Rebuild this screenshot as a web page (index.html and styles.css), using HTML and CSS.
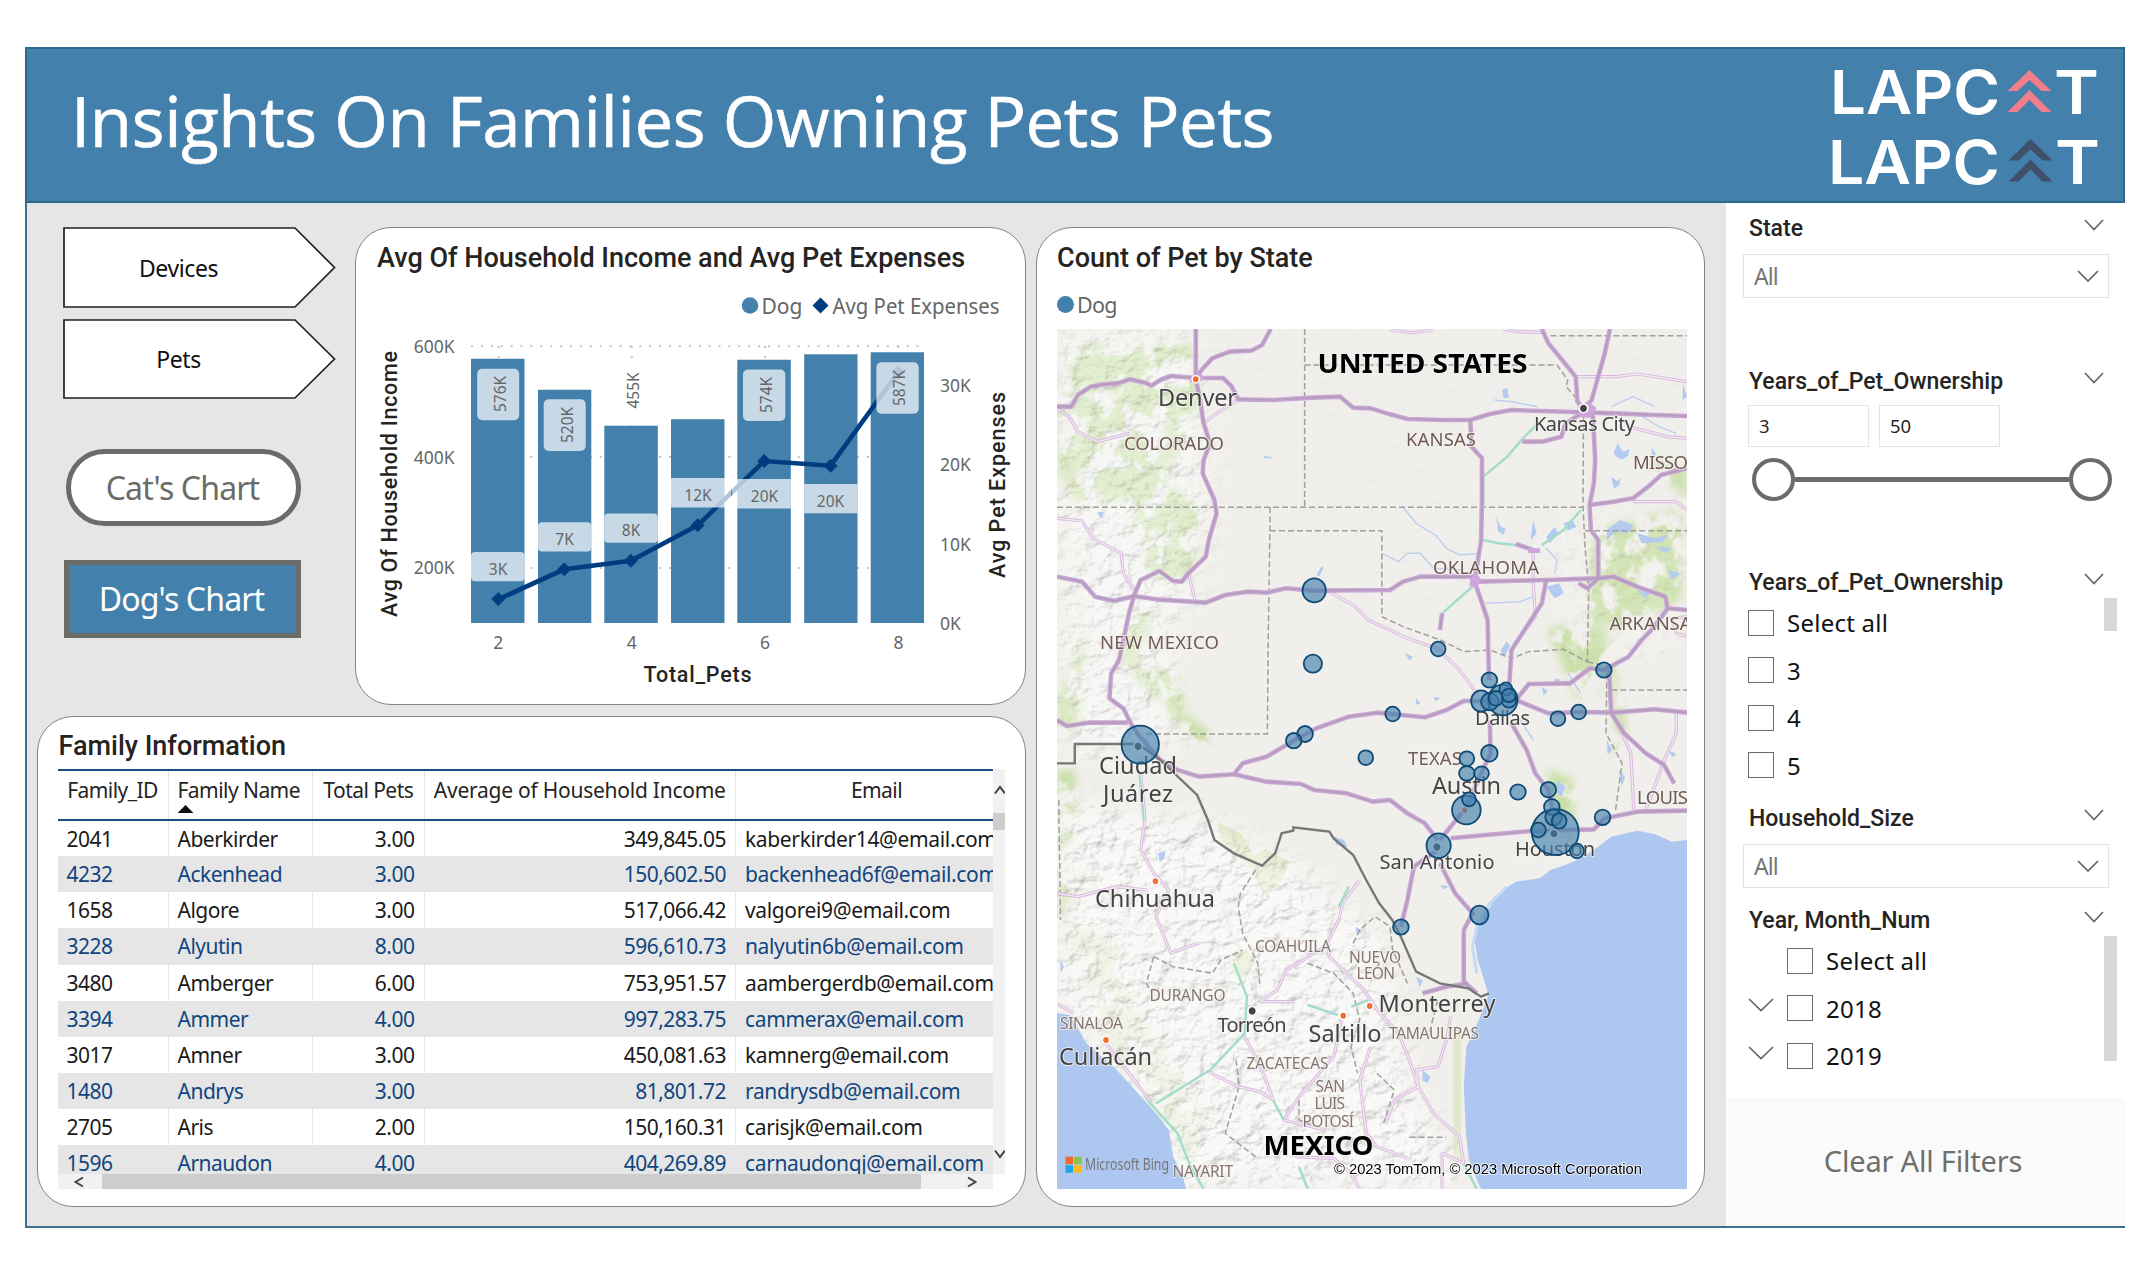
FILE: index.html
```html
<!DOCTYPE html>
<html lang="en">
<head>
<meta charset="utf-8">
<title>Insights On Families Owning Pets</title>
<link rel="stylesheet" href="styles.css">
</head>
<body>
<main class="report">
  <header class="header">
    <h1>Insights On Families Owning Pets Pets</h1>
    <div class="logos">
      <svg class="logo" width="270" height="69" viewBox="0 0 270 69">
        <text class="logo-text" x="-1" y="58" textLength="170" lengthAdjust="spacingAndGlyphs">LAPC</text>
        <path fill="#f17f8b" d="M198.500 14l22 21h-10l-12-11-12 11h-10zM198.500 34l22 22h-10l-12-12-12 12h-10z"/>
        <text class="logo-text" x="223" y="58" textLength="45" lengthAdjust="spacingAndGlyphs">T</text>
      </svg>
      <svg class="logo" width="270" height="70" viewBox="0 0 270 70">
        <text class="logo-text" x="-3" y="59" textLength="172" lengthAdjust="spacingAndGlyphs">LAPC</text>
        <path fill="#40506a" d="M199.500 14l22 21.500h-10l-12-11-12 11h-10zM199.500 34.500l22 22h-10l-12-12-12 12h-10z"/>
        <text class="logo-text" x="224" y="59" textLength="45" lengthAdjust="spacingAndGlyphs">T</text>
      </svg>
    </div>
  </header>

  <div class="body">
    <section class="canvas">
      <div class="left">
        <div class="top">
          <nav class="nav">
            <a class="arrow"><svg width="273" height="81" viewBox="0 0 273 81"><path d="M1 1H232L271.500 40.500 232 80H1Z" fill="#fff" stroke="#222" stroke-width="1.700"/></svg><span>Devices</span></a>
            <a class="arrow"><svg width="273" height="80" viewBox="0 0 273 80"><path d="M1 1H232L271.500 40 232 79H1Z" fill="#fff" stroke="#222" stroke-width="1.700"/></svg><span>Pets</span></a>
            <button class="btn cat">Cat's Chart</button>
            <button class="btn dog">Dog's Chart</button>
          </nav>

          <article class="card chart-card">
            <h2>Avg Of Household Income and Avg Pet Expenses</h2>
            <svg class="chart" width="669" height="420" viewBox="356 284 669 420">
              <g class="legend">
                <circle cx="750" cy="305.500" r="8.300" fill="#4482ac"/>
                <text x="761.500" y="314" textLength="41" lengthAdjust="spacingAndGlyphs">Dog</text>
                <path d="M820.500 297.500l8 8-8 8-8-8z" fill="#003d80"/>
                <text x="832.500" y="314" textLength="167" lengthAdjust="spacingAndGlyphs">Avg Pet Expenses</text>
              </g>
              <g class="grid">
                <path d="M471 346.300H924M471 457H924M471 568H924"/>
                <path d="M498.500 346V623M631.700 346V623M765 346V623M898.400 346V623"/>
              </g>
              <path class="bars" d="M471 358.700h53.500V623H471zM538 389.700h53.300V623H538zM604.300 425.700h53.500V623H604.300zM671 419.300h53.500V623H671zM737.300 359.700h53.500V623H737.300zM804.200 354.300h53.300V623H804.200zM870.700 352.300H924V623H870.700z"/>
              <polyline class="trend" points="498.300,599.300 564.300,569.300 630.800,560.700 697.700,525.300 764.200,461 830.600,465.700 898,372.700"/>
              <path fill="#003d80" d="M498.300 592l7 7-7 7-7-7zM564.300 562.300l7 7-7 7-7-7zM630.800 553.700l7 7-7 7-7-7zM697.700 518.300l7 7-7 7-7-7zM764.200 454l7 7-7 7-7-7zM830.600 458.700l7 7-7 7-7-7zM898 365.700l7 7-7 7-7-7z"/>
              <g class="tags">
                <rect x="471" y="552" width="53.500" height="29.300" rx="4"/>
                <rect x="538" y="522.300" width="53.300" height="29.300" rx="4"/>
                <rect x="604.300" y="513.500" width="53.500" height="29.300" rx="4"/>
                <rect x="671" y="478" width="60" height="29.500"/>
                <rect x="731.500" y="479" width="59.300" height="29.500"/>
                <rect x="804.200" y="484" width="53.300" height="29.300"/>
                <rect x="477.200" y="368.700" width="42" height="51.500" rx="5"/>
                <rect x="543.700" y="399.300" width="42" height="51.700" rx="5"/>
                <rect x="610" y="366" width="43" height="51" rx="5" class="blank"/>
                <rect x="743" y="369.500" width="42.300" height="51.500" rx="5"/>
                <rect x="876.400" y="362.300" width="42.300" height="51.500" rx="5"/>
              </g>
              <g class="tag-text">
                <text x="498" y="575">3K</text><text x="564.500" y="545">7K</text><text x="631" y="536">8K</text>
                <text x="698" y="501">12K</text><text x="764.500" y="502">20K</text><text x="830.500" y="507">20K</text>
                <text transform="translate(506 394) rotate(-90)">576K</text>
                <text transform="translate(573 425) rotate(-90)">520K</text>
                <text transform="translate(639 390.500) rotate(-90)">455K</text>
                <text transform="translate(772 395) rotate(-90)">574K</text>
                <text transform="translate(905 388) rotate(-90)">587K</text>
              </g>
              <g class="axis">
                <g text-anchor="end"><text x="454.500" y="352.500">600K</text><text x="454.500" y="463.500">400K</text><text x="454.500" y="573.500">200K</text></g>
                <text x="940" y="391.500">30K</text><text x="940" y="470.500">20K</text><text x="940" y="550.500">10K</text><text x="940" y="629.500">0K</text>
                <g text-anchor="middle"><text x="498.300" y="649">2</text><text x="631.700" y="649">4</text><text x="765" y="649">6</text><text x="898.400" y="649">8</text></g>
              </g>
              <g class="axis-title">
                <text x="643.500" y="682" textLength="108">Total_Pets</text>
                <text transform="translate(397 617) rotate(-90)" textLength="266">Avg Of Household Income</text>
                <text transform="translate(1004.500 578) rotate(-90)" textLength="186">Avg Pet Expenses</text>
              </g>
            </svg>
          </article>
        </div>

        <article class="card table-card">
          <h2>Family Information</h2>
          <div class="table-area">
            <div class="viewport">
              <table>
                <colgroup><col class="c1"><col class="c2"><col class="c3"><col class="c4"><col class="c5"></colgroup>
                <thead><tr><th>Family_ID</th><th class="l">Family Name<i class="sort"></i></th><th>Total Pets</th><th class="wide">Average of Household Income</th><th>Email</th></tr></thead>
                <tbody>
                  <tr><td>2041</td><td>Aberkirder</td><td>3.00</td><td>349,845.05</td><td>kaberkirder14@email.com</td></tr>
                  <tr><td>4232</td><td>Ackenhead</td><td>3.00</td><td>150,602.50</td><td>backenhead6f@email.com</td></tr>
                  <tr><td>1658</td><td>Algore</td><td>3.00</td><td>517,066.42</td><td>valgorei9@email.com</td></tr>
                  <tr><td>3228</td><td>Alyutin</td><td>8.00</td><td>596,610.73</td><td>nalyutin6b@email.com</td></tr>
                  <tr><td>3480</td><td>Amberger</td><td>6.00</td><td>753,951.57</td><td>aambergerdb@email.com</td></tr>
                  <tr><td>3394</td><td>Ammer</td><td>4.00</td><td>997,283.75</td><td>cammerax@email.com</td></tr>
                  <tr><td>3017</td><td>Amner</td><td>3.00</td><td>450,081.63</td><td>kamnerg@email.com</td></tr>
                  <tr><td>1480</td><td>Andrys</td><td>3.00</td><td>81,801.72</td><td>randrysdb@email.com</td></tr>
                  <tr><td>2705</td><td>Aris</td><td>2.00</td><td>150,160.31</td><td>carisjk@email.com</td></tr>
                  <tr><td>1596</td><td>Arnaudon</td><td>4.00</td><td>404,269.89</td><td>carnaudonqj@email.com</td></tr>
                </tbody>
              </table>
            </div>
            <div class="vscroll">
              <svg width="12" height="10" viewBox="0 0 12 10"><path d="M2 8.500l5-6.500 5 6.500"/></svg>
              <i></i>
              <svg width="12" height="10" viewBox="0 0 12 10"><path d="M2 1.500l5 6.500 5-6.500"/></svg>
            </div>
            <div class="hscroll">
              <svg width="10" height="12" viewBox="0 0 10 12"><path d="M9 1.500L1.500 6 9 10.500"/></svg>
              <i></i>
              <svg width="10" height="12" viewBox="0 0 10 12"><path d="M1 1.500L8.500 6 1 10.500"/></svg>
            </div>
          </div>
        </article>
      </div>

      <article class="card map-card">
        <h2>Count of Pet by State</h2>
        <p class="map-legend"><i></i>Dog</p>
        <svg class="map" width="630" height="860" viewBox="0 0 630 860">
          <defs>
            <filter id="relief" x="0" y="0" width="100%" height="100%">
              <feTurbulence type="fractalNoise" baseFrequency=".055 .07" numOctaves="4" seed="7"/>
              <feDiffuseLighting surfaceScale="4.500" diffuseConstant="1.150" lighting-color="#fff"><feDistantLight azimuth="225" elevation="60"/></feDiffuseLighting>
            </filter>
            <filter id="patchy" x="-5%" y="-5%" width="110%" height="110%">
              <feTurbulence type="fractalNoise" baseFrequency=".045 .035" numOctaves="5" seed="12" result="n"/>
              <feColorMatrix in="n" type="matrix" values="0 0 0 0 0  0 0 0 0 0  0 0 0 0 0  0 0 0 8 -3.200" result="a"/>
              <feGaussianBlur in="SourceGraphic" stdDeviation="4" result="s"/>
              <feComposite in="s" in2="a" operator="in"/>
            </filter>
            <filter id="edge" x="-10%" y="-10%" width="120%" height="120%"><feGaussianBlur stdDeviation="14"/></filter>
            <mask id="hills">
              <g filter="url(#edge)" fill="#fff">
                <path d="M0 0H130L150 130 140 270 110 300 130 420 20 430 0 400Z" opacity=".8"/>
                <path d="M0 470L60 480 150 490 250 540 330 610 350 740 410 860H110L60 740 0 680Z"/>
                <path d="M500 200H630V330H520Z" opacity=".3"/>
                <path d="M130 0H630V300H150Z" opacity=".08"/>
              </g>
            </mask>
          </defs>
          <rect width="630" height="860" fill="#f0efeb"/>
          <g filter="url(#patchy)" fill="#c9dfa6">
            <path d="M20 15H135L140 75 110 150 145 185 135 250 95 250 70 170 20 175 0 140V60Z"/>
            <path d="M75 270L95 280 80 330 130 350 125 380 160 410 140 420 90 360 60 330Z"/>
            <path d="M0 370L30 300 20 400 0 410ZM0 440H18L20 510 0 520ZM0 540L40 550 20 570 0 580Z"/>
            <path d="M540 200L625 180V270L560 300 520 280ZM490 300L545 290 560 350 520 370ZM590 130L630 140V170Z"/>
            <path d="M490 440L515 450 520 510 495 500ZM555 340L570 400 560 440Z"/>
            <path d="M0 570L60 620 90 700 150 790 140 860 110 800 60 740Z" opacity=".6"/>
          </g>
          <g fill="#cfdfa6"><path d="M160 493L185 505 197 528 208 520 232 532 228 545 210 568 190 535 165 512Z" opacity=".7"/><path d="M176 626l14-6 8 14-10 16-14-6z" opacity=".8"/><path d="M396 700h8v130h-8z" opacity=".45"/></g>
          <g mask="url(#hills)"><rect class="relief" width="630" height="860" filter="url(#relief)"/></g>

          <g transform="scale(.43367 .33333) translate(-62 -327)">
            <path class="water" d="M1515 1860L1480 1865 1440 1842 1400 1832 1340 1850 1300 1890 1270 1915 1235 1935 1200 1950 1175 1975 1120 1985 1100 2002 1070 2030 1062 2060 1045 2080 1033 2110 1025 2160 1032 2220 1047 2280 1057 2325 1035 2400 1006 2480 1000 2600 1005 2740 1012 2820 1027 2870 1040 2907H1515Z"/>
            <path class="water" d="M62 2380L92 2385 130 2470 200 2550 242 2610 290 2680 320 2730 330 2810 350 2860 360 2907H62Z"/>
            <path class="lagoon" d="M1100 2000L1060 2050 1030 2120 1020 2180 1030 2260"/>

            <g class="lakes">
              <path d="M1345 700l10-30 12 25 16-8-4 20-14 12-12-8zM1340 770l14 14 8-12-4 24-12 10zM1432 682l12 20-8 10zM1075 890l10 30 12 6-6 18-12-10zM1160 900l8 40-14 20zM1190 950l20-30 8 20-20 30zM1230 910l20-10 10 20-20 12zM1330 930l30-30 30 15-10 25-30-5-20 25zM1400 940l40 15 30-10-10 20-50 5zM1440 980l40 5-15 14zM1470 1050l30 10-20 20zM1190 1100l30-10 10 30-20 15zM1400 1110l30 10-10 15zM660 1065l12-26 5 4-10 26zM540 708l14 2 8 5-24 0zM1088 510l12-6 4 30-12 0zM155 875l14 2-6 20zM1505 490l10 40-10 10z"/>
              <path d="M1085 1290l14-25 8 10-14 40zM865 1300l18 10-8 12zM1180 1400l14 14-10 12zM930 1430l18 4-14 10zM890 1435l10 14-10 6zM1210 1375l14 4-14 12zM1215 1680l20 20-10 30-12-14zM1330 1560l12 30-10 14zM1358 1650l14 20-8 30zM295 1900l18-8-4 24-10 10zM700 1850l24 10 8 22-26-8zM750 2120l14 10-10 14zM905 2550l18 20-6 20-12-8zM890 2270l16 12-8 20zM945 1995l20 4-10 10zM1470 1590l20 12-8 10zM70 2220l8 20-8 20z"/>
            </g>
            <g class="rivers">
              <path d="M860 862L890 910 935 945 960 985 990 1005 1040 1000M811 1000L850 1025 870 1000 900 1000 930 1045 1000 1050M1070 540L1110 545 1170 560M1340 560L1390 530 1440 560M1050 1150L1130 1145 1160 1130M1190 985L1215 1020 1210 1060"/>
              <path d="M1400 580L1450 620 1490 640M1130 1500L1160 1560M1240 1360L1270 1420"/>
            </g>

            <g class="state-lines">
              <path d="M633 327V862M633 435H1215L1240 480 1236 500 1276 560M1200 347H1515M62 862H1275M553 862V932L549 1260 547 1542H260M553 932H811V1190L860 1220 950 1262 1000 1295 1060 1290 1110 1315 1150 1295 1230 1288 1285 1325 1288 1100 1280 990 1275 862 1276 590M1280 932H1515M1285 1325L1330 1340 1328 1540 1365 1630 1350 1770M1340 1410H1515M66 1740L70 2100"/>
              <path d="M520 1950L485 2020 480 2060 490 2140 525 2230 530 2300M285 2210L330 2240 420 2260 440 2220 490 2190M285 2210L268 2290 280 2320M745 2170L760 2130 795 2090 830 2120 836 2190 870 2290M640 2230L700 2260 745 2320 760 2400 740 2480 755 2560M475 2520L482 2600 450 2740 520 2810M620 2640V2700L680 2730M875 2752H960M800 2560L840 2610 815 2710M940 2340L920 2440"/>
            </g>

            <g class="minor-roads">
              <g id="minor">
              <path d="M62 565L90 590 110 635 155 665 230 640M1090 327L1120 335 1180 337M830 330L880 338 930 330M690 1115L750 1160 780 1200 870 1255 941 1287 990 1350 1030 1420M62 895L120 903 145 955 210 1000 215 1060 240 1110M1160 1000L1160 1080 1165 1190 1125 1260M1258 470L1350 470 1400 462 1515 485M1380 620L1470 650 1515 655M1390 845H1490L1515 870M1515 1190L1480 1195 1490 1240 1515 1250M365 1060L380 1140M480 538L430 580 400 610"/>
              <path d="M1345 1480L1385 1600 1392 1770M1490 1480V1540L1462 1620 1440 1700 1420 1770M255 1660L265 1800 255 1890 285 1960 320 2010 290 2090 325 2200 390 2168M62 2020L110 2030 200 2000 270 2010M760 1980L720 2050 712 2100 685 2170 690 2210 770 2310 800 2370 850 2440 880 2540 895 2600 930 2680 990 2750 1000 2830 950 2800 950 2907"/>
              <path d="M690 2170L630 2220 590 2250 570 2310 530 2345H610M490 2440L520 2510 550 2600 560 2640 530 2615 480 2600 410 2555M720 2390L700 2510 620 2630 585 2700 680 2730M785 2480L760 2580 775 2740 800 2780 870 2815M970 2390L960 2460 940 2540 890 2550 895 2600 840 2640 820 2710M175 2470L240 2580 280 2650M62 2350L100 2380M610 2810L700 2815 740 2860 760 2907"/>
              </g>
              <use href="#minor" class="core"/>
            </g>
            <g class="teal">
              <path d="M1180 600L1140 650 1100 710 1045 770V860M1045 960L1080 970 1120 975M1270 870L1230 930 1180 975M1020 1100L950 1180M1180 573L1245 578M470 2230L500 2330 495 2440 415 2550 290 2650M270 2640L340 2740 370 2840 400 2907M640 2355L710 2385M740 2360L780 2340M560 2640L585 2700M640 2907L620 2840M252 1660L262 1800M735 2000L712 2060M1000 2830L1030 2907"/>
            </g>
            <g class="major-roads">
              <g id="major">
              <path d="M382 327V478L392 540 400 610 415 670 400 720 398 760 425 840 430 880 412 960 405 1010 365 1060 350 1085 330 1083 298 1053 255 1080 240 1125 228 1180 220 1230 205 1320 187 1360 183 1435 215 1465 232 1510 250 1545 300 1620 340 1650 390 1670 470 1663 545 1685 625 1692 655 1710 730 1720 790 1745 830 1740 870 1780 910 1810 940 1860"/>
              <path d="M555 327L535 375 510 392 460 395 420 415 395 450 382 478M62 560H95L110 525 140 500 170 493 200 490 230 478 265 488 280 497 300 480 325 468 382 474H445L465 500 480 538 560 540 650 533 715 530 745 563 785 565 830 583 870 597 950 600H1015L1060 582 1110 570 1180 573 1276 577 1350 580 1440 585 1515 588"/>
              <path d="M62 1070L120 1085 150 1130 195 1143 240 1128 290 1138 405 1148 450 1125 500 1115 545 1118 590 1105 655 1112 830 1110 860 1085 900 1070 1025 1070 1030 1085 1190 1080 1310 1075 1345 1070 1400 1100 1465 1130 1470 1165 1515 1170M1470 1165L1440 1220 1410 1260 1380 1310 1323 1350 1290 1345 1245 1390 1150 1392 1120 1440"/>
              <path d="M1180 327L1195 370 1230 425 1258 470 1262 545 1276 565 1295 540 1310 470 1325 400 1337 327M1276 565L1298 590 1303 720 1300 790 1290 855 1293 930 1310 960V1075L1285 1105 1265 1090M1290 855L1345 845 1390 835 1425 800 1455 765 1515 745M1015 600L1018 680 1042 715 1042 830 1040 960 1025 1085 1045 1160 1055 1200 1058 1380M1135 665L1180 665 1225 650 1235 610 1276 577M1190 1080L1180 1150 1110 1290 1105 1390M1160 990L1120 972M950 1180L945 1230"/>
              <path d="M62 1500L85 1518 135 1508H225M470 1663L490 1630 545 1610 608 1562 660 1525 735 1490 800 1478 910 1492 960 1470 1000 1443H1040L1120 1440 1195 1480 1265 1476 1345 1478 1440 1468 1515 1478M1335 1350L1340 1480 1370 1540 1420 1600 1462 1635 1485 1690M1060 1500L1062 1600 1040 1660 1007 1760 945 1860M1110 1510L1145 1590 1165 1660 1195 1710 1205 1770M970 1855L1050 1845 1155 1833 1300 1828 1325 1795 1400 1775 1515 1772M940 1890L885 1940 870 2040 855 2120M945 1930L980 2020 1020 2080 1000 2130V2285L1030 2320M905 2320L960 2300 1010 2290"/>
              </g>
              <use href="#major" class="core"/>
              <path d="M370 470l24-10 8 16-16 14-18-4zM1262 560l24-16 20 20-14 30-26-4zM1015 1075l14-16 12 20-12 26-16-8zM1148 985h28v14h-28z" class="hub"/>
            </g>
            <path class="border" d="M62 1630H103V1572H250L300 1620 385 1725 410 1800 425 1860 470 1900 535 1937 565 1900 580 1840 607 1832V1822L690 1835 700 1855 745 1905 775 1980 805 2050 835 2100 855 2150 890 2255 945 2290 1010 2305 1040 2330 1058 2320"/>

            <g class="dots">
              <g fill="#f26f31"><ellipse cx="382" cy="478" rx="8.500" ry="11"/><ellipse cx="289" cy="1984" rx="8.500" ry="11"/><ellipse cx="175" cy="2460" rx="8.500" ry="11"/><ellipse cx="722" cy="2387" rx="8.500" ry="11"/><ellipse cx="783" cy="2358" rx="8.500" ry="11"/><ellipse cx="1002" cy="1771" rx="8.500" ry="11"/></g>
              <g fill="#444"><ellipse cx="1276" cy="565" rx="10" ry="13"/><ellipse cx="512" cy="2373" rx="10" ry="13"/><ellipse cx="249" cy="1579" rx="10" ry="13"/><ellipse cx="938" cy="1881" rx="10" ry="13"/><ellipse cx="1208" cy="1841" rx="10" ry="13"/></g>
            </g>
          </g>

          <g class="region">
            <text x="67" y="120.700" textLength="100">COLORADO</text>
            <text x="349" y="117.300" textLength="70">KANSAS</text>
            <text x="576" y="140.300" textLength="55">MISSO</text>
            <text x="376" y="245" textLength="106">OKLAHOMA</text>
            <text x="552.500" y="301" textLength="82">ARKANSA</text>
            <text x="43" y="320.300" textLength="119">NEW MEXICO</text>
            <text x="351" y="435.700" textLength="54">TEXAS</text>
            <text x="580" y="474.700" textLength="51">LOUIS</text>
          </g>
          <g class="region small">
            <text x="198" y="622.700" textLength="76">COAHUILA</text>
            <text x="292" y="634" textLength="52">NUEVO</text>
            <text x="299.500" y="649.700" textLength="38.500">LEÓN</text>
            <text x="92.500" y="672" textLength="76">DURANGO</text>
            <text x="3" y="700.300" textLength="63">SINALOA</text>
            <text x="332" y="710" textLength="90">TAMAULIPAS</text>
            <text x="189.500" y="739.700" textLength="82">ZACATECAS</text>
            <text x="258.500" y="762.700" textLength="29.500">SAN</text>
            <text x="257.500" y="780" textLength="30.500">LUIS</text>
            <text x="245.500" y="797.700" textLength="51.500">POTOSÍ</text>
            <text x="115.500" y="848" textLength="60.500">NAYARIT</text>
          </g>
          <g class="city">
            <text x="101" y="76.700" textLength="79">Denver</text>
            <text x="42" y="445.300" textLength="78">Ciudad</text>
            <text x="46" y="472.700" textLength="70">Juárez</text>
            <text x="375" y="464.700" textLength="69">Austin</text>
            <text x="38" y="578.300" textLength="120">Chihuahua</text>
            <text x="251.500" y="713.300" textLength="73">Saltillo</text>
            <text x="321.500" y="683.300" textLength="117">Monterrey</text>
            <text x="2" y="736" textLength="93">Culiacán</text>
          </g>
          <g class="city small">
            <text x="477" y="102.300" textLength="101">Kansas City</text>
            <text x="418" y="395.700" textLength="55">Dallas</text>
            <text x="322.500" y="540" textLength="115">San Antonio</text>
            <text x="458" y="527.300" textLength="80">Houston</text>
            <text x="160.500" y="703.300" textLength="69">Torreón</text>
          </g>
          <g class="country">
            <text x="260.500" y="44.300" textLength="210" lengthAdjust="spacingAndGlyphs">UNITED STATES</text>
            <text x="206.500" y="825.700" textLength="110" lengthAdjust="spacingAndGlyphs">MEXICO</text>
          </g>

          <g class="bubbles" transform="scale(.43367 .33333) translate(-62 -327)">
            <ellipse cx="655" cy="1111" rx="27" ry="36"/><ellipse cx="652" cy="1331" rx="21" ry="27"/><ellipse cx="941" cy="1287" rx="17" ry="22"/><ellipse cx="1059" cy="1380" rx="18" ry="23"/><ellipse cx="1323" cy="1350" rx="18" ry="23"/>
            <ellipse cx="1040" cy="1443" rx="23" ry="32"/><ellipse cx="1090" cy="1440" rx="34" ry="46"/><ellipse cx="1060" cy="1445" rx="20" ry="26"/><ellipse cx="1104" cy="1440" rx="17" ry="23"/><ellipse cx="1074" cy="1435" rx="17" ry="22"/><ellipse cx="1097" cy="1407" rx="15" ry="20"/><ellipse cx="1104" cy="1426" rx="16" ry="20"/>
            <ellipse cx="1265" cy="1476" rx="17" ry="22"/><ellipse cx="1217" cy="1496" rx="17" ry="22"/><ellipse cx="836" cy="1482" rx="17" ry="22"/><ellipse cx="634" cy="1542" rx="18" ry="24"/><ellipse cx="608" cy="1562" rx="18" ry="23"/>
            <ellipse cx="254" cy="1574" rx="43" ry="57"/><ellipse cx="774" cy="1613" rx="17" ry="22"/><ellipse cx="1007" cy="1616" rx="17" ry="22"/><ellipse cx="1059" cy="1600" rx="19" ry="25"/><ellipse cx="1007" cy="1660" rx="18" ry="22"/><ellipse cx="1041" cy="1660" rx="17" ry="21"/>
            <ellipse cx="1125" cy="1716" rx="18" ry="23"/><ellipse cx="1195" cy="1709" rx="18" ry="23"/><ellipse cx="1006" cy="1770" rx="33" ry="43"/><ellipse cx="1012" cy="1738" rx="16" ry="21"/>
            <ellipse cx="1211" cy="1836" rx="54" ry="69"/><ellipse cx="1203" cy="1761" rx="18" ry="24"/><ellipse cx="1207" cy="1792" rx="19" ry="24"/><ellipse cx="1220" cy="1803" rx="17" ry="23"/><ellipse cx="1172" cy="1830" rx="17" ry="22"/><ellipse cx="1261" cy="1893" rx="16" ry="22"/><ellipse cx="1320" cy="1792" rx="18" ry="23"/>
            <ellipse cx="942" cy="1877" rx="28" ry="37"/><ellipse cx="1036" cy="2085" rx="21" ry="28"/><ellipse cx="855" cy="2121" rx="18" ry="23"/>
          </g>

          <g><path fill="#f1672c" d="M8.500 827.700h7.500v7.500H8.500z"/><path fill="#8bc34a" d="M17 827.700h7.500v7.500H17z"/><path fill="#1ba8ea" d="M8.500 836.200h7.500v7.500H8.500z"/><path fill="#fbba1a" d="M17 836.200h7.500v7.500H17z"/></g>
          <text class="bing" x="28" y="841" textLength="84" lengthAdjust="spacingAndGlyphs">Microsoft Bing</text>
          <text class="copyright" x="277" y="845.300" textLength="308" lengthAdjust="spacingAndGlyphs">© 2023 TomTom, © 2023 Microsoft Corporation</text>
        </svg>
      </article>
    </section>

    <aside class="filters">
      <section class="filter state">
        <h3>State<svg width="20" height="12" viewBox="0 0 20 12"><path d="M1 1l9 9.500L19 1"/></svg></h3>
        <div class="select">All<svg width="22" height="12" viewBox="0 0 22 12"><path d="M1 1l10 10L21 1"/></svg></div>
      </section>
      <section class="filter range">
        <h3>Years_of_Pet_Ownership<svg width="20" height="12" viewBox="0 0 20 12"><path d="M1 1l9 9.500L19 1"/></svg></h3>
        <div class="inputs"><span>3</span><span>50</span></div>
        <div class="slider"><i></i><b></b><i></i></div>
      </section>
      <section class="filter years">
        <h3>Years_of_Pet_Ownership<svg width="20" height="12" viewBox="0 0 20 12"><path d="M1 1l9 9.500L19 1"/></svg></h3>
        <div class="list">
          <ul><li><i></i>Select all</li><li><i></i>3</li><li><i></i>4</li><li><i></i>5</li></ul>
          <div class="thumb short"></div>
        </div>
      </section>
      <section class="filter size">
        <h3>Household_Size<svg width="20" height="12" viewBox="0 0 20 12"><path d="M1 1l9 9.500L19 1"/></svg></h3>
        <div class="select">All<svg width="22" height="12" viewBox="0 0 22 12"><path d="M1 1l10 10L21 1"/></svg></div>
      </section>
      <section class="filter months">
        <h3>Year, Month_Num<svg width="20" height="12" viewBox="0 0 20 12"><path d="M1 1l9 9.500L19 1"/></svg></h3>
        <div class="list">
          <ul class="tree">
            <li><svg width="26" height="14" viewBox="0 0 26 14"></svg><i></i>Select all</li>
            <li><svg width="26" height="14" viewBox="0 0 26 14"><path d="M1 1l12 11.500L25 1"/></svg><i></i>2018</li>
            <li><svg width="26" height="14" viewBox="0 0 26 14"><path d="M1 1l12 11.500L25 1"/></svg><i></i>2019</li>
          </ul>
          <div class="thumb long"></div>
        </div>
      </section>
      <button class="clear">Clear All Filters</button>
    </aside>
  </div>
</main>
</body>
</html>
```
FILE: styles.css
```css
* { box-sizing: border-box; }
body {
  margin: 0;
  padding: 47px 25px 0;
  background: #fff;
  font-family: "Noto Sans", "Open Sans", sans-serif;
  color: #1f1f1f;
}
h1, h2, h3, p, ul { margin: 0; padding: 0; font-weight: 400; }
ul { list-style: none; }
svg { display: block; flex: none; }

.report { width: 2100px; height: 1181px; display: flex; flex-direction: column; border-bottom: 2px solid #3d6f92; }

/* header */
.header {
  height: 156px;
  flex: none;
  display: flex;
  justify-content: space-between;
  padding: 0 22px 0 44px;
  background: #4381ac;
  border: 2px solid #2f678c;
}
h1 { font: 400 69px/142px "Open Sans", sans-serif; color: #fff; letter-spacing: -.42px; white-space: nowrap; -webkit-text-stroke: .6px #fff; }
.logos { display: flex; flex-direction: column; padding-top: 7px; }
.logo { overflow: visible; }
.logo-text { font: 600 61px Inter, sans-serif; fill: #fff; }

.body { flex: 1; display: flex; min-height: 0; }
.canvas {
  width: 1701px;
  display: flex;
  gap: 10px;
  padding: 24px 0 0 10px;
  background: #e6e6e6;
  border-left: 2px solid #3d6f92;
}
.left { width: 989px; display: flex; flex-direction: column; gap: 11px; }
.top { display: flex; justify-content: space-between; padding-left: 26px; }

/* navigation */
.nav { display: flex; flex-direction: column; align-items: flex-start; }
.arrow { position: relative; margin-bottom: 11px; }
.arrow span {
  position: absolute;
  inset: 0 42px 0 0;
  display: flex;
  align-items: center;
  justify-content: center;
  font-size: 23px;
  letter-spacing: -.4px;
  color: #111;
}
.btn { height: 78px; border: 5px solid #6b6b67; font: 400 32px/60px "Noto Sans", sans-serif; letter-spacing: -.85px; padding: 0 2px 0 0; }
.cat { width: 235px; height: 77px; margin: 39px 0 34px 3px; border-radius: 39px; background: #fff; color: #6b6b67; }
.dog { width: 237px; margin-left: 1px; background: #4381ac; color: #fff; }

/* cards */
.card { background: #fff; border: 1.600px solid #858585; border-radius: 36px; }
.card h2 { font: 500 27px/32px Roboto, sans-serif; color: #252423; white-space: nowrap; }
.chart-card { width: 671px; height: 478px; }
.chart-card h2, .map-card h2 { padding: 14px 0 0 21px; height: 56px; }
.chart text { font-family: "Noto Sans", sans-serif; }
.legend text { font-size: 21.5px; fill: #666; }
.grid path { stroke: #c4c4c4; stroke-width: 2; stroke-dasharray: 2 7.9; fill: none; }
.bars { fill: #4381ac; }
.trend { fill: none; stroke: #003d80; stroke-width: 4.600; }
.tags rect { fill: #fff; fill-opacity: .7; }
.tags .blank { fill-opacity: 1; }
.tag-text text { font-size: 15.500px; fill: #666; text-anchor: middle; }
.axis text { font-size: 17.500px; fill: #666; }
.chart .axis-title text { font: 500 21.500px Roboto, sans-serif; fill: #252423; }

/* table */
.table-card { height: 491px; padding: 13px 0 0 19.500px; }
.table-card h2 { height: 39px; padding-left: 1px; }
.table-area { display: grid; grid-template-columns: 935px 12px; grid-template-rows: 405px 15px; }
.viewport { overflow: hidden; border-top: 2px solid #1b4f82; }
table { width: 960px; border-collapse: collapse; table-layout: fixed; font-size: 21px; letter-spacing: -.5px; }
.c1 { width: 110.500px; } .c2 { width: 144.500px; } .c3 { width: 111.500px; } .c4 { width: 311.500px; } .c5 { width: 282px; }
th { height: 49px; padding: 4px 0 0; font-weight: 400; line-height: 30px; color: #252423; border-bottom: 2px solid #1b4f82; letter-spacing: -.55px; white-space: nowrap; vertical-align: top; }
th.wide { letter-spacing: -.25px; }
th:last-child { padding-right: 0; }
th.l { text-align: left; padding-left: 9px; }
th, td { border-right: 1.500px solid #e6e6e6; }
.sort { display: block; width: 16px; height: 8px; margin-top: 0; background: #111; clip-path: polygon(50% 0, 100% 100%, 0 100%); }
td { height: 36.140px; padding: 0 9px; line-height: 30px; white-space: nowrap; color: #1a1a1a; }
td:nth-child(3), td:nth-child(4) { text-align: right; }
td:nth-child(5) { letter-spacing: -.36px; }
tbody tr:nth-child(even) { background: #e6e6e6; }
tbody tr:nth-child(even) td { color: #11457f; }
.vscroll { display: flex; flex-direction: column; background: #f1f1f1; padding: 16px 0 15px; }
.vscroll path, .hscroll path { fill: none; stroke: #444; stroke-width: 2; }
.vscroll i { height: 17px; margin: 18px 0 auto; background: #cdcdcd; }
.hscroll { display: flex; align-items: center; background: #f1f1f1; padding: 0 16px; }
.hscroll i { width: 819px; height: 15px; margin: 0 auto 0 18px; background: #cdcdcd; }

/* map */
.map-card { width: 669px; height: 980px; overflow: hidden; }
.map-card h2 { padding-left: 20px; }
.map-legend { height: 45px; display: flex; align-items: center; gap: 3px; padding: 0 0 4px 20px; font-size: 21.500px; letter-spacing: -.7px; color: #666; }
.map-legend i { width: 17px; height: 17px; border-radius: 50%; background: #4381ac; }
.map { margin-left: 20px; overflow: hidden; }
.map path { vector-effect: non-scaling-stroke; }
.relief { mix-blend-mode: multiply; opacity: .6; }
.water { fill: #adc7f1; }
.lagoon { fill: none; stroke: #c6d9f6; stroke-width: 3; }
.lakes { fill: #b3cbf0; }
.rivers { fill: none; stroke: #bfd0ec; stroke-width: 1.500; }
.state-lines { fill: none; stroke: #a09f9d; stroke-width: 1.500; stroke-dasharray: 6 3; }
.minor-roads, .major-roads, .teal { fill: none; stroke-linejoin: round; }
.minor-roads { stroke: #d9b9de; stroke-width: 3.200; }
.minor-roads .core { stroke: #f3ebf3; stroke-width: 1.300; }
.teal { stroke: #a4dccb; stroke-width: 2.500; }
.major-roads { stroke: #c9a6d5; stroke-width: 4.600; }
.major-roads .core { stroke: #b29cba; stroke-width: 1.600; }
.major-roads .hub { fill: #cfa5dc; stroke: none; }
.border { fill: none; stroke: #777; stroke-width: 2.400; }
.dots ellipse { stroke: #fff; stroke-width: 4; }
.map text { font-family: "Noto Sans", sans-serif; paint-order: stroke; stroke: #f5f4f1; stroke-opacity: .75; stroke-width: 2px; stroke-linejoin: round; }
.region text { font-size: 18.500px; fill: #705a55; }
.region.small text { font-size: 15.500px; fill: #857470; }
.city text { font-size: 23.500px; fill: #444; }
.city.small text { font-size: 20px; }
.country text { font-size: 26px; font-weight: 700; fill: #000; }
.bubbles { fill: #4381ac; fill-opacity: .65; stroke: #0e4a75; stroke-width: 1.800; }
.bubbles ellipse { vector-effect: non-scaling-stroke; }
.map .bing { font-size: 15.500px; fill: #777; stroke: none; }
.map .copyright { font-family: "Liberation Sans", sans-serif; font-size: 15px; fill: #000; stroke: #fff; }

/* filters */
.filters { width: 399px; background: #fff; }
.filter { padding: 0 16px 0 23px; }
.filter h3 { display: flex; justify-content: space-between; align-items: flex-start; font: 500 23px/30px Roboto, sans-serif; color: #252423; padding-right: 5px; }
.filters path { fill: none; stroke: #666; stroke-width: 1.700; }
.filter h3 svg { margin-top: 5px; }
.state { height: 151.500px; padding-top: 11px; }
.range { height: 202.500px; padding-top: 12px; }
.years { height: 236px; padding-top: 11px; }
.size { height: 101px; padding-top: 11px; }
.months { height: 204px; padding-top: 12px; }
.select { height: 44px; margin: 9.500px 0 0 -6px; padding: 0 9px 0 10px; display: flex; align-items: center; justify-content: space-between; border: 1.600px solid #e4e4e4; font-size: 23px; line-height: 40px; letter-spacing: -.9px; color: #767676; }
.inputs { display: flex; gap: 10px; margin: 8.500px 0 0 -1px; }
.inputs span { width: 121px; height: 42px; padding-left: 10px; border: 1.600px solid #e4e4e4; font-size: 18.500px; line-height: 39px; color: #252423; }
.slider { display: flex; align-items: center; margin: 11px 0 0 3px; width: 360px; }
.slider i { width: 43px; height: 43px; flex: none; border: 4px solid #6b6b67; border-radius: 50%; background: #fff; }
.slider b { flex: 1; height: 5px; background: #6b6b67; }
.list { display: flex; justify-content: space-between; margin-right: -8px; }
.list ul { padding-top: 1px; margin-left: -1px; }
.list li { height: 47.500px; display: flex; align-items: center; gap: 13px; font-size: 24px; letter-spacing: .25px; color: #111; }
.list li i { width: 26px; height: 26px; border: 1.500px solid #6b6b67; background: #fff; }
.list li svg { margin-top: -6px; }
.thumb { width: 13px; background: #d8d8d8; }
.short { height: 33px; }
.long { height: 125px; }
.clear { display: block; width: 399px; height: 128px; border: 0; background: #fafafa; font: 400 29px "Noto Sans", sans-serif; letter-spacing: -.2px; color: #6f6f6c; padding: 0 5px 4px 0; }
```
